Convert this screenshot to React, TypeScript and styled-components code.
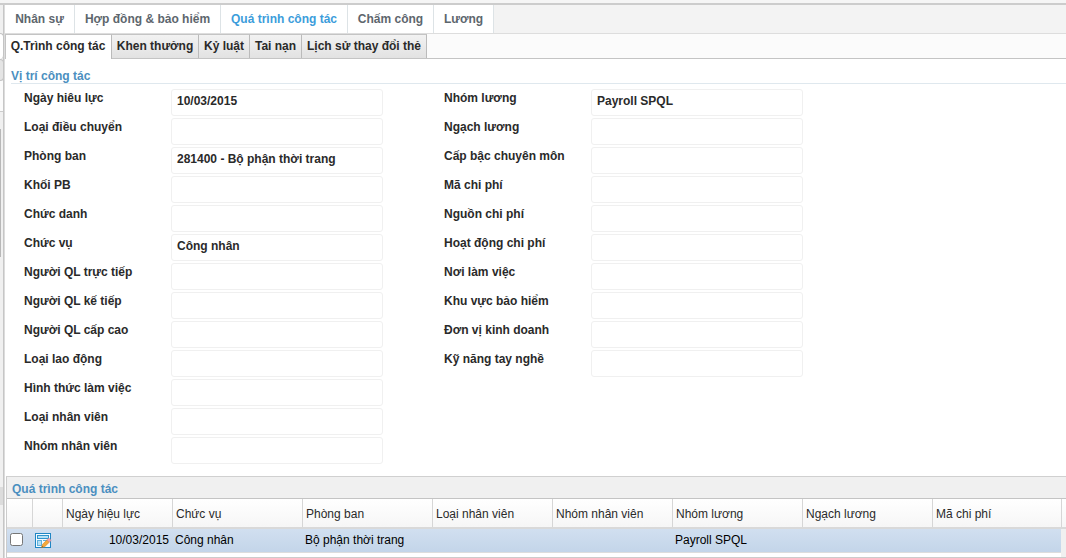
import React from "react";
import styled, { createGlobalStyle, css } from "styled-components";

const Global = createGlobalStyle`
  * { box-sizing: border-box; }
  body {
    margin: 0;
    background: #fff;
    overflow: hidden;
    font-family: "Liberation Sans", Arial, sans-serif;
    font-size: 12px;
    color: #2a2a2a;
  }
`;

const Page = styled.div`
  width: 1066px;
  height: 558px;
  display: flex;
  flex-direction: column;
  overflow: hidden;
`;
const TopEdge = styled.div`
  flex: none;
  height: 5px;
  background: #f5f5f5;
  border-bottom: 2px solid #ccc;
`;
const Body = styled.div`
  flex: 1;
  min-height: 0;
  display: flex;
`;
const Rail = styled.div`
  flex: none;
  width: 5px;
  display: flex;
  flex-direction: column;
  background: #f0f0f0;
  border-right: 1px solid #dcdcdc;
  box-shadow: inset -1px 0 #c6c6c6;
`;
const RailPart = styled.div<{ $h: number; $bg?: string; $line?: string; $round?: boolean }>`
  flex: none;
  width: 3px;
  height: ${(p) => p.$h}px;
  background: ${(p) => p.$bg ?? "transparent"};
  ${(p) => p.$line && css`border-bottom: 1px solid ${p.$line};`}
  ${(p) => p.$round && css`
    width: 4px;
    border-top: 1px solid #c4c4c4;
    border-right: 1px solid #c4c4c4;
    border-radius: 0 4px 4px 0;
  `}
`;
const RailThumb = styled.div`
  flex: none;
  width: 1px;
  height: 128px;
  background: #b8b8b8;
`;
const Main = styled.main`
  flex: 1;
  min-width: 0;
  display: flex;
  flex-direction: column;
`;

const TabBar = styled.nav`
  flex: none;
  display: flex;
  height: 29px;
  background: #f3f3f3;
  border-bottom: 1px solid #ddd;
`;
const Tab = styled.div<{ $w: number; $active?: boolean }>`
  flex: none;
  width: ${(p) => p.$w}px;
  text-align: center;
  font-weight: bold;
  line-height: 28px;
  white-space: nowrap;
  background: #fff;
  border-right: 1px solid #dde3e6;
  color: ${(p) => (p.$active ? "#3c9ddb" : "#5d666d")};
`;
const SubBar = styled.nav`
  flex: none;
  display: flex;
  height: 25px;
  background: #fbfbfb;
  border-bottom: 1px solid #c4c4c4;
`;
const SubTab = styled.div<{ $w: number; $active?: boolean }>`
  flex: none;
  width: ${(p) => p.$w}px;
  height: ${(p) => (p.$active ? 25 : 24)}px;
  text-align: center;
  font-weight: bold;
  line-height: 22px;
  white-space: nowrap;
  background: ${(p) => (p.$active ? "#fff" : "linear-gradient(#f2f2f2, #e2e2e2)")};
  border-top: 1px solid #c4c4c4;
  border-right: 1px solid #bbb;
  ${(p) => p.$active && css`box-shadow: inset 1px 0 #c4c4c4;`}
`;

const SectionTitle = styled.h2`
  flex: none;
  margin: 0 0 0 6px;
  height: 25px;
  padding-top: 10px;
  font-size: 12px;
  line-height: 14px;
  color: #4b8fc0;
  border-bottom: 1px solid #dfe8ee;
`;
const Form = styled.div`
  flex: none;
  display: flex;
  height: 392px;
  padding: 5px 0 0 19px;
  gap: 61px;
`;
const FormColumn = styled.div`
  width: 359px;
  display: flex;
  flex-direction: column;
  gap: 2px;
`;
const Field = styled.div`
  display: flex;
  height: 27px;
`;
const Label = styled.label`
  width: 147px;
  line-height: 14px;
  padding-top: 2px;
  font-weight: bold;
  white-space: nowrap;
`;
const Value = styled.div`
  width: 212px;
  height: 27px;
  padding: 0 5px;
  line-height: 23px;
  font-weight: bold;
  border: 1px solid #f0f0f0;
  border-radius: 3px;
`;

const Grid = styled.section`
  flex: 1;
  margin-left: 1px;
  border-left: 1px solid #ccc;
  border-top: 1px solid #d0d0d0;
  background: #f0f0f0;
`;
const GridTitle = styled.h2`
  margin: 0;
  height: 22px;
  padding-left: 5px;
  font-size: 12px;
  line-height: 24px;
  color: #4b8fc0;
  border-bottom: 1px solid #c4c4c4;
`;
const HeadRow = styled.div`
  display: flex;
  height: 30px;
  background: linear-gradient(#fff, #f6f6f6);
  border-bottom: 2px solid #d9d9d9;
`;
const HeadCell = styled.div<{ $w: number }>`
  flex: none;
  width: ${(p) => p.$w}px;
  padding-left: 3px;
  line-height: 30px;
  white-space: nowrap;
  border-right: 1px solid #d6d6d6;
`;
const DataRow = styled.div`
  display: flex;
  align-items: center;
  width: 1054px;
  height: 24px;
  padding-bottom: 2px;
  color: #000;
  background: linear-gradient(#d1dff0, #c3d5e9);
  border-bottom: 1px solid #ddd;
`;
const DataCell = styled.div<{ $w: number; $right?: boolean }>`
  flex: none;
  display: flex;
  justify-content: ${(p) => (p.$right ? "flex-end" : "flex-start")};
  width: ${(p) => p.$w}px;
  padding: 0 4px 0 2px;
  white-space: nowrap;
`;
const RowEnd = styled.div`
  height: 5px;
  background: linear-gradient(to right, #fff 1054px, #f0f0f0 1054px);
  border-bottom: 1px solid #ccc;
`;
const Check = styled.span`
  width: 13px;
  height: 13px;
  margin-left: 1px;
  background: #fff;
  border: 1px solid #767676;
  border-radius: 2.5px;
`;
const EditSvg = styled.svg`
  display: block;
  margin-top: 2px;
`;

const EditIcon = () => (
  <EditSvg width="17" height="16" viewBox="0 0 17 16">
    <rect x="0.5" y="0.5" width="15" height="14" fill="#f4fbff" stroke="#1f86c4" />
    <rect x="2" y="2" width="12" height="4" fill="#2f93cd" />
    <rect x="3" y="3" width="10" height="2" fill="#b5e0f5" />
    <rect x="2" y="7" width="5" height="6" fill="#5fb0dc" />
    <rect x="3" y="8" width="3" height="4" fill="#b5e0f5" />
    <rect x="8" y="7" width="5" height="1" fill="#5fb0dc" />
    <path d="M6.5 14.6l1-3.2 4.6-4.6 2.3 2.3-4.7 4.6z" fill="#f7a93a" stroke="#cf7d1c" strokeWidth="0.6" />
    <path d="M11.9 6.9l1.6-1.5c.5-.5 3 1.7 2.4 2.3l-1.5 1.5z" fill="#f2a3ae" stroke="#c4858f" strokeWidth="0.5" />
    <path d="M6.5 14.6l.5-1.6 1.1 1.1z" fill="#6b4a20" />
  </EditSvg>
);

const tabs = [
  { text: "Nhân sự", w: 70 },
  { text: "Hợp đồng & bảo hiểm", w: 146 },
  { text: "Quá trình công tác", w: 127, active: true },
  { text: "Chấm công", w: 86 },
  { text: "Lương", w: 60 },
];
const subTabs = [
  { text: "Q.Trình công tác", w: 107, active: true },
  { text: "Khen thưởng", w: 87 },
  { text: "Kỷ luật", w: 51 },
  { text: "Tai nạn", w: 52 },
  { text: "Lịch sử thay đổi thẻ", w: 125 },
];
const columns: [string, string][][] = [
  [
    ["Ngày hiêu lực", "10/03/2015"],
    ["Loại điều chuyển", ""],
    ["Phòng ban", "281400 - Bộ phận thời trang"],
    ["Khối PB", ""],
    ["Chức danh", ""],
    ["Chức vụ", "Công nhân"],
    ["Người QL trực tiếp", ""],
    ["Người QL kế tiếp", ""],
    ["Người QL cấp cao", ""],
    ["Loại lao động", ""],
    ["Hình thức làm việc", ""],
    ["Loại nhân viên", ""],
    ["Nhóm nhân viên", ""],
  ],
  [
    ["Nhóm lương", "Payroll SPQL"],
    ["Ngạch lương", ""],
    ["Cấp bậc chuyên môn", ""],
    ["Mã chi phí", ""],
    ["Nguồn chi phí", ""],
    ["Hoạt động chi phí", ""],
    ["Nơi làm việc", ""],
    ["Khu vực bảo hiểm", ""],
    ["Đơn vị kinh doanh", ""],
    ["Kỹ năng tay nghề", ""],
  ],
];
const gridColumns = [
  { head: "Ngày hiệu lực", value: "10/03/2015", w: 110, right: true },
  { head: "Chức vụ", value: "Công nhân", w: 130 },
  { head: "Phòng ban", value: "Bộ phận thời trang", w: 130 },
  { head: "Loại nhân viên", value: "", w: 120 },
  { head: "Nhóm nhân viên", value: "", w: 120 },
  { head: "Nhóm lương", value: "Payroll SPQL", w: 130 },
  { head: "Ngạch lương", value: "", w: 130 },
  { head: "Mã chi phí", value: "", w: 129 },
];

export default function App() {
  return (
    <Page>
      <Global />
      <TopEdge />
      <Body>
        <Rail>
          <RailPart $h={28} />
          <RailPart $h={26} $bg="#fff" $round />
          <RailPart $h={22} $bg="#e4e4e4" $line="#c4c4c4" $round />
          <RailPart $h={31} $bg="#fbfbfb" $line="#ccc" />
          <RailPart $h={17} />
          <RailThumb />
          <RailPart $h={230} />
          <RailPart $h={18} $bg="#dcdcdc" />
        </Rail>
        <Main>
          <TabBar>
            {tabs.map((t) => (
              <Tab key={t.text} $w={t.w} $active={t.active}>{t.text}</Tab>
            ))}
          </TabBar>
          <SubBar>
            {subTabs.map((t) => (
              <SubTab key={t.text} $w={t.w} $active={t.active}>{t.text}</SubTab>
            ))}
          </SubBar>
          <SectionTitle>Vị trí công tác</SectionTitle>
          <Form>
            {columns.map((fields, i) => (
              <FormColumn key={i}>
                {fields.map(([label, value]) => (
                  <Field key={label}>
                    <Label>{label}</Label>
                    <Value>{value}</Value>
                  </Field>
                ))}
              </FormColumn>
            ))}
          </Form>
          <Grid>
            <GridTitle>Quá trình công tác</GridTitle>
            <HeadRow>
              <HeadCell $w={26} />
              <HeadCell $w={30} />
              {gridColumns.map((c) => (
                <HeadCell key={c.head} $w={c.w}>{c.head}</HeadCell>
              ))}
            </HeadRow>
            <DataRow>
              <DataCell $w={26}><Check /></DataCell>
              <DataCell $w={30}><EditIcon /></DataCell>
              {gridColumns.map((c) => (
                <DataCell key={c.head} $w={c.w} $right={c.right}>{c.value}</DataCell>
              ))}
            </DataRow>
            <RowEnd />
          </Grid>
        </Main>
      </Body>
    </Page>
  );
}
